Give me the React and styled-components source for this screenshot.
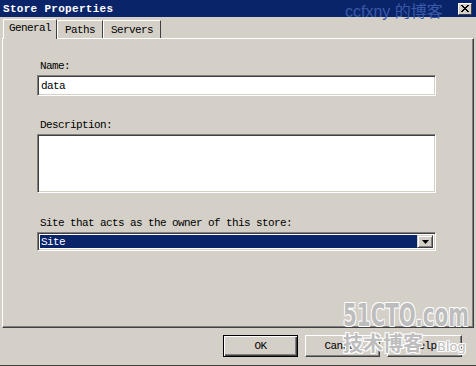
import React from 'react'
import styled, { createGlobalStyle } from 'styled-components'

const GlobalStyle = createGlobalStyle`
  body {
    margin: 0;
    background: #d4d0c8;
  }
`

const font = `'Liberation Mono', 'DejaVu Sans Mono', monospace`

const Window = styled.div`
  position: relative;
  width: 476px;
  height: 366px;
  box-sizing: border-box;
  display: flex;
  flex-direction: column;
  background: #d4d0c8;
  border-bottom: 1px solid #404040;
  overflow: hidden;
  font-family: ${font};
  font-size: 11px;
  letter-spacing: -0.6px;
  color: #000;
`

const TitleBar = styled.div`
  height: 17px;
  flex: none;
  display: flex;
  align-items: center;
  justify-content: space-between;
  padding: 0 4px 0 3px;
  background: #0a246a;
  color: #fff;
`

const Title = styled.span`
  font-weight: bold;
  letter-spacing: 0.3px;
`

const CloseButton = styled.div`
  width: 14px;
  height: 12px;
  box-sizing: border-box;
  display: flex;
  align-items: center;
  justify-content: center;
  background: #d4d0c8;
  border: 1px solid;
  border-color: #fff #404040 #404040 #fff;
`

const TabStrip = styled.div`
  height: 21px;
  flex: none;
  display: flex;
  align-items: flex-end;
  padding-left: 3px;
`

const Tab = styled.div`
  height: ${(p) => (p.active ? 20 : 18)}px;
  box-sizing: border-box;
  display: flex;
  align-items: center;
  padding: 0 ${(p) => (p.active ? 5 : 7)}px ${(p) => (p.active ? 3 : 0)}px;
  margin-bottom: ${(p) => (p.active ? -1 : 0)}px;
  border: 1px solid;
  border-bottom: none;
  border-color: #fff #404040 transparent #fff;
  background: #d4d0c8;
  position: relative;
  z-index: ${(p) => (p.active ? 1 : 0)};
`

const Panel = styled.div`
  height: 290px;
  flex: none;
  box-sizing: border-box;
  margin: 0 2px 0 2px;
  padding: 21px 37px 0 34px;
  border: 1px solid;
  border-color: #fff #404040 #404040 #fff;
  box-shadow: inset -1px -1px 0 #808080;
  display: flex;
  flex-direction: column;
`

const Field = styled.div`
  display: flex;
  flex-direction: column;
  margin-bottom: ${(p) => p.gap || 0}px;
`

const Label = styled.label`
  line-height: 13px;
  padding-left: 3px;
  margin-bottom: 2px;
`

const Sunken = styled.div`
  height: ${(p) => p.h}px;
  box-sizing: border-box;
  border: 1px solid;
  border-color: #808080 #fff #fff #808080;
  box-shadow: inset 1px 1px 0 #404040, inset -1px -1px 0 #d4d0c8;
  background: #fff;
  display: flex;
  align-items: center;
  padding: 0 3px;
`

const SelectBox = styled(Sunken)`
  padding: 2px;
  align-items: stretch;
`

const Selected = styled.div`
  flex: 1;
  background: #0a246a;
  color: #fff;
  display: flex;
  align-items: center;
  padding-left: 1px;
`

const DropButton = styled.div`
  width: 16px;
  box-sizing: border-box;
  display: flex;
  align-items: center;
  justify-content: center;
  background: #d4d0c8;
  border: 1px solid;
  border-color: #d4d0c8 #404040 #404040 #d4d0c8;
  box-shadow: inset 1px 1px 0 #fff, inset -1px -1px 0 #808080;
`

const ButtonRow = styled.div`
  display: flex;
  justify-content: flex-end;
  gap: 7px;
  padding: 7px 14px 0 0;
`

const Button = styled.div`
  width: 75px;
  height: 22px;
  box-sizing: border-box;
  display: flex;
  align-items: center;
  justify-content: center;
  border: 1px solid;
  border-color: ${(p) => (p.primary ? '#000' : '#fff #404040 #404040 #fff')};
  box-shadow: ${(p) =>
    p.primary
      ? 'inset 1px 1px 0 #fff, inset -1px -1px 0 #404040, inset -2px -2px 0 #808080'
      : 'inset -1px -1px 0 #808080'};
`

const TitleMark = styled.span`
  position: absolute;
  top: -2px;
  left: 345px;
  font-family: 'Liberation Sans', 'Noto Sans CJK SC', sans-serif;
  font-size: 16px;
  letter-spacing: 0;
  color: #3a5aa8;
`

const SiteMark = styled.div`
  position: absolute;
  left: 343px;
  top: 300px;
  display: flex;
  flex-direction: column;
  align-items: flex-start;
  font-family: 'DejaVu Sans Condensed', 'Noto Sans CJK SC', sans-serif;
  font-weight: bold;
  letter-spacing: 0;
  color: #bdbdbd;
  text-shadow: 1px 1px 0 #fff, -1px -1px 0 #fff, 1px -1px 0 #fff, -1px 1px 0 #fff;
  pointer-events: none;
`

const BigMark = styled.span`
  font-size: 32px;
  line-height: 30px;
  transform: scaleX(0.69);
  transform-origin: left;
  white-space: nowrap;
`

const SubMark = styled.span`
  font-size: 20px;
  line-height: 26px;
  font-family: 'Noto Sans CJK SC', sans-serif;
  white-space: nowrap;

  small {
    font-family: 'DejaVu Sans', sans-serif;
    font-weight: normal;
    font-size: 13px;
    margin-left: 14px;
  }
`

const App = () => (
  <Window>
    <GlobalStyle />
    <TitleBar>
      <Title>Store Properties</Title>
      <CloseButton>
        <svg width="8" height="7" viewBox="0 0 8 7">
          <path d="M0 0L7 7M1 0L8 7M7 0L0 7M8 0L1 7" stroke="#000" strokeWidth="1" />
        </svg>
      </CloseButton>
    </TitleBar>
    <TabStrip>
      <Tab active>General</Tab>
      <Tab>Paths</Tab>
      <Tab>Servers</Tab>
    </TabStrip>
    <Panel>
      <Field gap={23}>
        <Label>Name:</Label>
        <Sunken h={21}>data</Sunken>
      </Field>
      <Field gap={24}>
        <Label>Description:</Label>
        <Sunken h={59} />
      </Field>
      <Field>
        <Label>Site that acts as the owner of this store:</Label>
        <SelectBox h={19}>
          <Selected>Site</Selected>
          <DropButton>
            <svg width="7" height="4" viewBox="0 0 7 4">
              <path d="M0 0H7L3.5 4Z" fill="#000" />
            </svg>
          </DropButton>
        </SelectBox>
      </Field>
    </Panel>
    <ButtonRow>
      <Button primary>OK</Button>
      <Button>Cancel</Button>
      <Button>Help</Button>
    </ButtonRow>
    <TitleMark>ccfxny 的博客</TitleMark>
    <SiteMark>
      <BigMark>51CTO.com</BigMark>
      <SubMark>
        技术博客<small>Blog</small>
      </SubMark>
    </SiteMark>
  </Window>
)

export default App
